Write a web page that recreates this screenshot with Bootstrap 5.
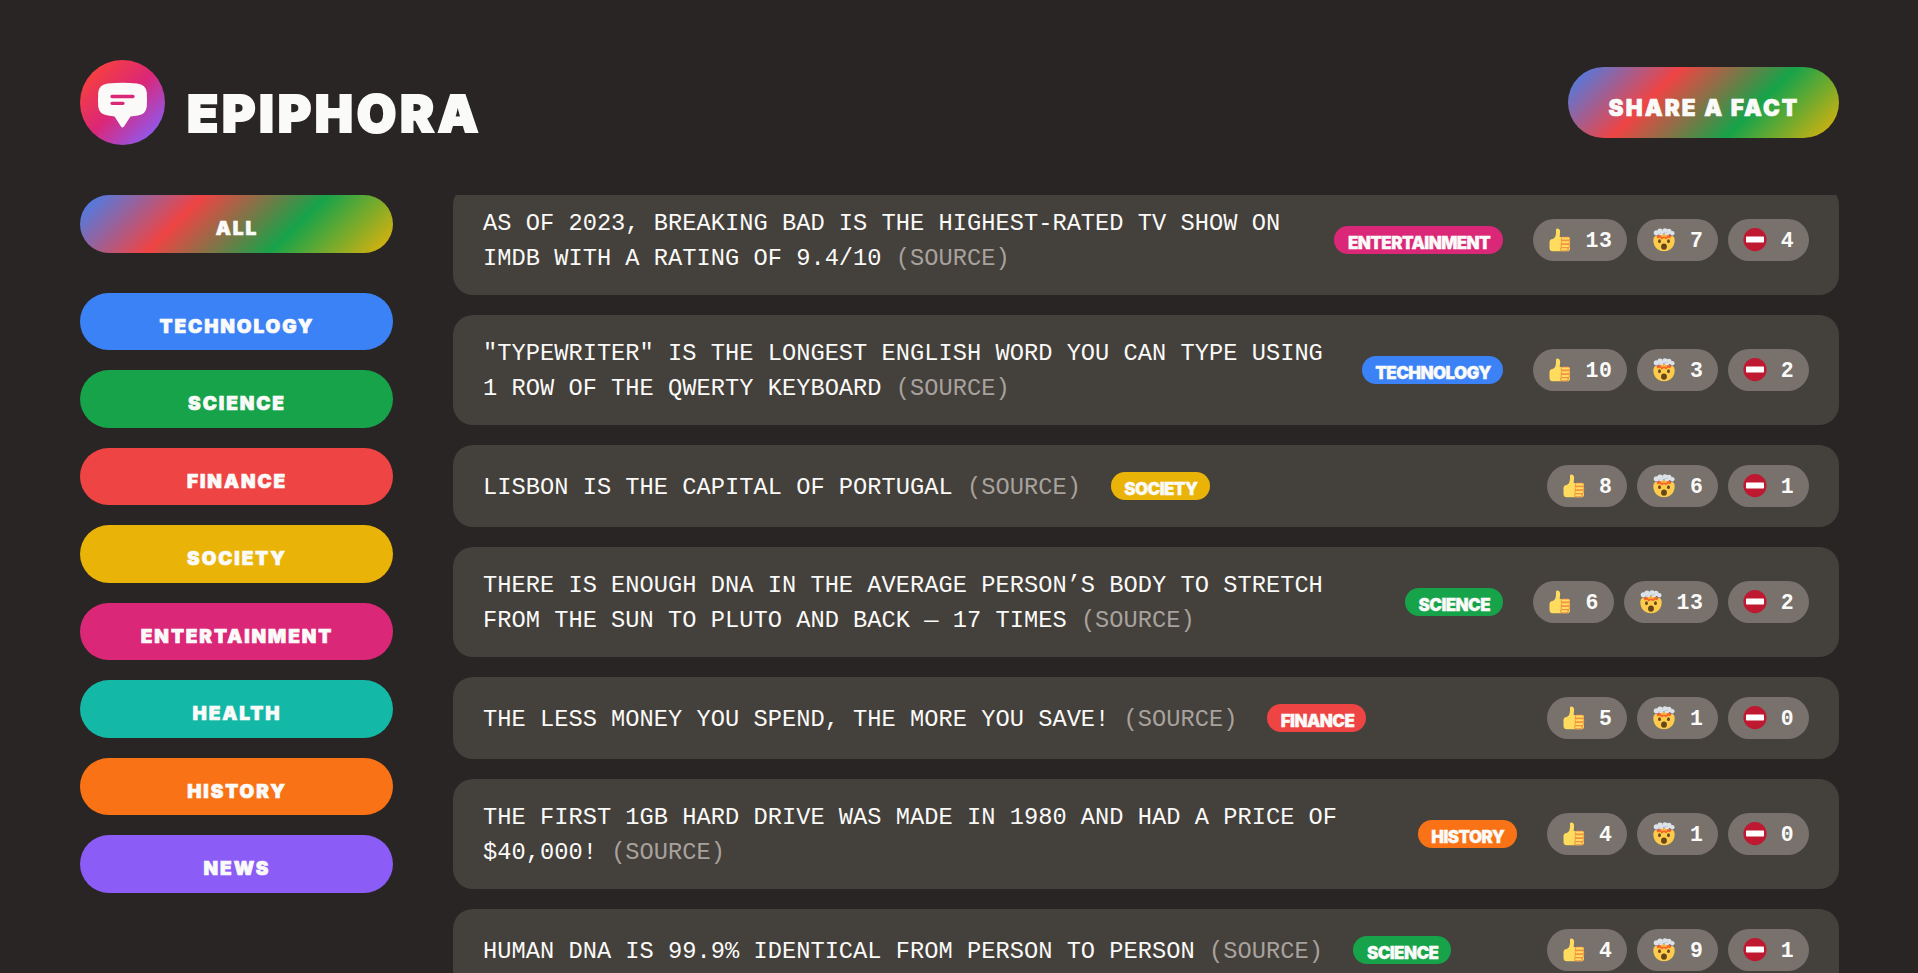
<!DOCTYPE html>
<html lang="en">
<head>
<meta charset="utf-8">
<meta name="viewport" content="width=device-width, initial-scale=1">
<title>Epiphora</title>
<link rel="stylesheet" href="https://cdn.jsdelivr.net/npm/bootstrap@5.3.0/dist/css/bootstrap.min.css">
<style>
  :root {
    --technology: #3b82f6; --science: #16a34a; --finance: #ef4444; --society: #eab308;
    --entertainment: #db2777; --health: #14b8a6; --history: #f97316; --news: #8b5cf6;
  }
  body { background: #292524; color: #fafaf9; font-family: "Liberation Mono", monospace; padding: 60px 79px 0 80px; height: 100vh; overflow: hidden; }
  .display-face { font-family: Inter, "Open Sans", sans-serif; font-weight: 900; text-transform: uppercase; color: #fafaf9; -webkit-text-stroke: .7px #fafaf9; paint-order: stroke fill; stroke-linejoin: round; white-space: nowrap; }
  .site-header { height: 85px; margin-bottom: 50px; }
  .brand-mark { width: 85px; height: 85px; }
  .brand-name { font-size: 51px; line-height: 1; letter-spacing: 3.7px; margin: 28px 0 0 22px; -webkit-text-stroke-width: 2px; }
  .rainbow { background: linear-gradient(135deg, #3b82f6, #ef4444, #16a34a, #eab308); }
  .btn-share { width: 271px; height: 71px; margin-top: -1px; font-size: 22.5px; letter-spacing: 2.1px; padding: 12px 0 0 1px; border: 0; line-height: 1; }
  .side-nav { width: 313px; }
  .cat-group { gap: 20px; margin-top: 40px; }
  .btn-cat { height: 57.5px; font-size: 19px; letter-spacing: 1.9px; padding: 10px 0 0 1px; border: 0; line-height: 1; }
  .fact-list { margin-left: 60px; height: 778px; overflow: hidden; }
  .fact-stack { gap: 20px; margin-top: -10px; }
  .fact { background: #44403b; border-radius: 20px; padding: 20px 30px; gap: 30px; flex-shrink: 0; }
  .fact-text { font-size: 23.7px; line-height: 35px; letter-spacing: .02px; margin: 1px 0 -1px; text-transform: uppercase; }
  .src { color: #a8a29e; text-decoration: none; }
  .tag { height: 28px; border-radius: 14px; font-size: 17px; line-height: 1; padding: 9px 0 0 1px; flex-shrink: 0; text-align: center; letter-spacing: -.6px; -webkit-text-stroke-width: .3px; }
  .votes { gap: 10px; flex-shrink: 0; }
  .btn-vote { height: 42px; border: 0; border-radius: 21px; background: #78716c; padding: 0 14.8px 0 15px; color: #fafaf9; font-weight: 700; font-size: 21.5px; letter-spacing: .6px; line-height: 1; }
  .btn-vote svg { width: 24px; height: 24px; margin-right: 13.5px; }
  .btn-vote span { padding-top: 3px; }
  .bg-technology { background: var(--technology); } .bg-science { background: var(--science); }
  .bg-finance { background: var(--finance); } .bg-society { background: var(--society); }
  .bg-entertainment { background: var(--entertainment); } .bg-health { background: var(--health); }
  .bg-history { background: var(--history); } .bg-news { background: var(--news); }
  .tag.bg-entertainment { width: 169px; } .tag.bg-technology { width: 141px; }
  .tag.bg-society, .tag.bg-finance { width: 99px; } .tag.bg-science, .tag.bg-history { width: 98.500px; }
</style>
</head>
<body>
<svg class="d-none" aria-hidden="true">
  <symbol id="thumb" viewBox="0 0 24 24">
    <path fill="#ffdb5e" d="M8 1.500Q8.300.400 9.500.500C11.600.800 12.300 2.300 12.100 4.300L11.700 8.900H20q2 .5 2 2.500v9q0 2.800-3 2.800H5q-3.500 0-3.500-3.500v-5.500q0-3 3-3.300C6.700 10.500 7.900 7.900 8 4.400z"/>
    <path fill="#ee9547" d="M14.200 8.700h6q2.200.4 2 2.600-.2 1-.7 1.400 1 1 .8 2.300-.2 1.200-1 1.800.7 1 .5 2-.3 1-1 1.500.5 3-2.600 3h-4q-2.200 0-2.200-2.400.1-1 .9-1.500-1.200-1.800.2-3-1.200-1.700.1-3-1.100-4 1-4.700z"/>
    <path stroke="#ffdb5e" stroke-width="2" stroke-linecap="round" d="M14.600 10.500h6M14.500 14.200h6M14.300 17.900h5.700M14.100 21.300h4.500"/>
  </symbol>
  <symbol id="blown" viewBox="0 0 24 24">
    <path fill="#ffcb4c" d="M1.300 12q0-3 2-4h17.400q2 1 2 4c0 7-4.700 11.300-10.700 11.300S1.300 19 1.300 12z"/>
    <path fill="#f4622c" d="M4.500 8.300l2-1.500h11l2 1.500-1.300 1.900-2-.8-2 1.900-2.200-1.400-2.300 1.500-1.800-2-2.200 1z"/>
    <path fill="#ffac33" d="M9.500 6h5l.5 3.200-3-.5-3 .6z"/>
    <g fill="#dbe3e9"><circle cx="4.300" cy="4.800" r="2.600"/><circle cx="8" cy="3.100" r="2.700"/><circle cx="13" cy="2.900" r="2.700"/><circle cx="17" cy="3.400" r="2.600"/><circle cx="20.300" cy="5.200" r="2.200"/><circle cx="9" cy="5.200" r="2.200"/><circle cx="15" cy="5.200" r="2.300"/></g>
    <path fill="none" stroke="#c2ced6" d="M6 6.200q2 .8 3-1M12 4.300q2 1.500 4-.5"/>
    <ellipse cx="7.500" cy="13.200" rx="1.400" ry="1.900" fill="#65471b"/><ellipse cx="16.500" cy="13.200" rx="1.400" ry="1.900" fill="#65471b"/>
    <ellipse cx="12" cy="18.600" rx="2.900" ry="3.200" fill="#65471b"/>
  </symbol>
  <symbol id="stop" viewBox="0 0 24 24">
    <circle cx="12" cy="11.600" r="11.600" fill="#be1931"/><rect x="3" y="8.600" width="18" height="5.800" rx=".7" fill="#fff"/>
  </symbol>
</svg>

<header class="site-header d-flex justify-content-between align-items-center">
  <div class="d-flex">
    <svg class="brand-mark" viewBox="0 0 85 85">
      <defs><linearGradient id="lg" x1="0.1" y1="0.1" x2="0.9" y2="0.9"><stop stop-color="#f9423a"/><stop offset=".5" stop-color="#db2777"/><stop offset="1" stop-color="#8b5cf6"/></linearGradient></defs>
      <circle cx="42.500" cy="42.500" r="42.500" fill="url(#lg)"/>
      <path fill="#fafaf9" d="M28 23.500q14.500-1.300 29 0 9 1 9.800 9 .4 7 0 14-.9 8-9 9l-7.300 1-6.700 10.300q-1.300 1.400-2.600 0L34.500 56.500l-6.500-1q-9-1-9.800-9-.4-7 0-14 .8-8 9.800-9z"/>
      <path stroke="#db2777" stroke-width="3.300" stroke-linecap="round" d="M32 36.500h21M32 43.300h11"/>
    </svg>
    <h1 class="brand-name display-face">Epiphora</h1>
  </div>
  <button class="btn btn-share rainbow rounded-pill display-face">Share a fact</button>
</header>

<main class="d-flex">
  <aside class="side-nav flex-shrink-0">
    <button class="btn btn-cat rainbow rounded-pill display-face d-block w-100">All</button>
    <div class="cat-group d-flex flex-column">
      <button class="btn btn-cat bg-technology rounded-pill display-face">Technology</button>
      <button class="btn btn-cat bg-science rounded-pill display-face">Science</button>
      <button class="btn btn-cat bg-finance rounded-pill display-face">Finance</button>
      <button class="btn btn-cat bg-society rounded-pill display-face">Society</button>
      <button class="btn btn-cat bg-entertainment rounded-pill display-face">Entertainment</button>
      <button class="btn btn-cat bg-health rounded-pill display-face">Health</button>
      <button class="btn btn-cat bg-history rounded-pill display-face">History</button>
      <button class="btn btn-cat bg-news rounded-pill display-face">News</button>
    </div>
  </aside>
  <section class="fact-list flex-grow-1">
    <div class="fact-stack d-flex flex-column" id="facts"></div>
  </section>
</main>

<script src="https://cdn.jsdelivr.net/npm/bootstrap@5.3.0/dist/js/bootstrap.bundle.min.js"></script>
<script>
  const facts = [
    ['As of 2023, Breaking Bad is the highest-rated TV show on IMDB with a rating of 9.4/10', 'entertainment', 13, 7, 4],
    ['"Typewriter" is the longest English word you can type using 1 row of the QWERTY keyboard', 'technology', 10, 3, 2],
    ['Lisbon is the capital of Portugal', 'society', 8, 6, 1],
    ['There is enough DNA in the average person’s body to stretch from the sun to Pluto and back — 17 times', 'science', 6, 13, 2],
    ['The less money you spend, the more you save!', 'finance', 5, 1, 0],
    ['The first 1GB hard drive was made in 1980 and had a price of $40,000!', 'history', 4, 1, 0],
    ['Human DNA is 99.9% identical from person to person', 'science', 4, 9, 1]
  ];
  const vote = (icon, n) => `<button class="btn btn-vote d-flex align-items-center"><svg><use href="#${icon}"/></svg><span>${n}</span></button>`;
  document.getElementById('facts').innerHTML = facts.map(([text, cat, a, b, c]) => `
    <article class="fact d-flex align-items-center">
      <p class="fact-text">${text} <a class="src" href="#">(Source)</a></p>
      <span class="tag display-face bg-${cat}">${cat}</span>
      <div class="votes d-flex ms-auto">${vote('thumb', a)}${vote('blown', b)}${vote('stop', c)}</div>
    </article>`).join('');
</script>
</body>
</html>
